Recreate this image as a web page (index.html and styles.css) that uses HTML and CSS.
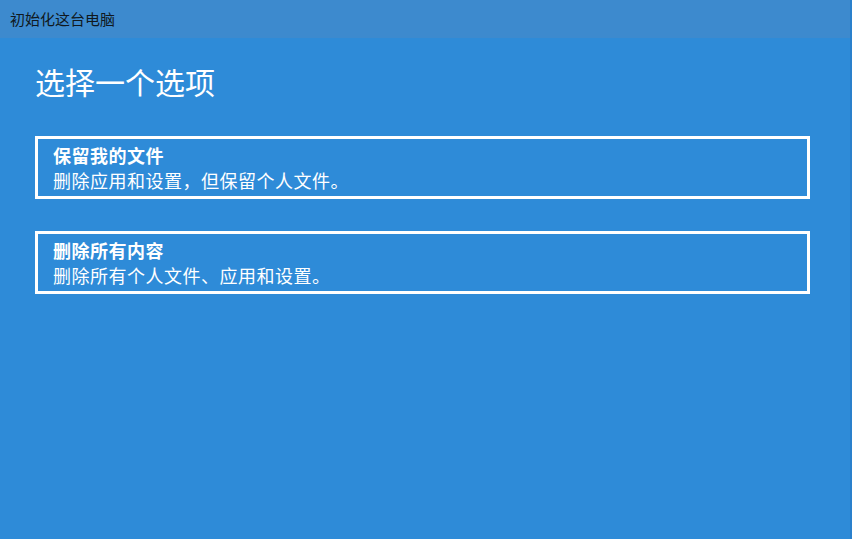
FILE: index.html
```html
<!DOCTYPE html>
<html lang="zh-CN">
<head>
<meta charset="utf-8">
<title>初始化这台电脑</title>
<link rel="stylesheet" href="styles.css">
</head>
<body>
<div class="window">
  <div class="titlebar">初始化这台电脑</div>
  <div class="content">
    <h1 class="heading">选择一个选项</h1>
    <div class="options">
      <div class="option">
        <div class="option-title">保留我的文件</div>
        <div class="option-desc">删除应用和设置，但保留个人文件。</div>
      </div>
      <div class="option">
        <div class="option-title">删除所有内容</div>
        <div class="option-desc">删除所有个人文件、应用和设置。</div>
      </div>
    </div>
  </div>
</div>
</body>
</html>
```

FILE: styles.css
```css
html, body {
  margin: 0;
  padding: 0;
  height: 100%;
}
body {
  font-family: "Noto Sans CJK SC", "Noto Sans", sans-serif;
  background: #2e8bd8;
}
.window {
  height: 539px;
  display: flex;
  flex-direction: column;
  background: #2e8bd8;
  border-right: 2px solid #2a80cc;
  box-sizing: border-box;
}
.titlebar {
  height: 38px;
  line-height: 38px;
  padding-left: 10px;
  font-size: 15px;
  color: #101820;
  background: #3d8ace;
  flex: none;
}
.content {
  padding: 0 0 0 35px;
  flex: 1;
}
.heading {
  margin: 28px 0 0 0;
  font-size: 30px;
  line-height: 30px;
  font-weight: normal;
  color: #ffffff;
}
.options {
  margin-top: 40px;
  display: flex;
  flex-direction: column;
  gap: 32px;
}
.option {
  width: 775px;
  height: 63px;
  box-sizing: border-box;
  border: 3px solid #ffffff;
  padding: 4px 15px 0 15px;
  color: #ffffff;
  letter-spacing: 0.5px;
}
.option-title {
  font-size: 18px;
  line-height: 25px;
  font-weight: bold;
}
.option-desc {
  font-size: 18px;
  line-height: 25px;
}
```
